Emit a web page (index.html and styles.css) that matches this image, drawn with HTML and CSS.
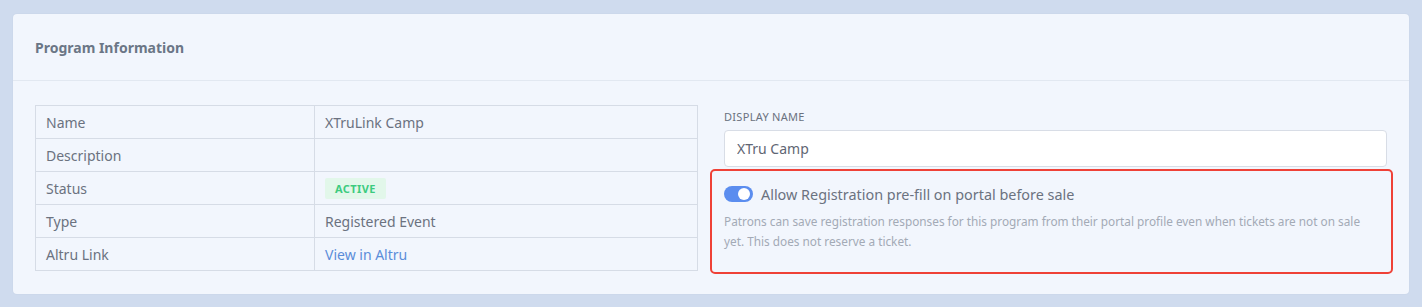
FILE: index.html
```html
<!DOCTYPE html>
<html lang="en">
<head>
  <meta charset="UTF-8">
  <meta name="viewport" content="width=device-width, initial-scale=1.0">
  <title>Program Information</title>
  <link rel="stylesheet" href="styles.css">
</head>
<body>
  <div class="card">
    <div class="card-header">
      <h2>Program Information</h2>
    </div>
    <div class="card-body">
      <table class="info-table">
        <tr><td>Name</td><td>XTruLink Camp</td></tr>
        <tr><td>Description</td><td></td></tr>
        <tr><td>Status</td><td><span class="badge">Active</span></td></tr>
        <tr><td>Type</td><td>Registered Event</td></tr>
        <tr><td>Altru Link</td><td><a href="#" class="link">View in Altru</a></td></tr>
      </table>

      <div class="side">
        <label class="field-label" for="displayName">Display Name</label>
        <input type="text" id="displayName" class="field-input" value="XTru Camp">

        <div class="highlight">
          <div class="toggle-row">
            <span class="toggle"><span class="knob"></span></span>
            <span class="toggle-label">Allow Registration pre-fill on portal before sale</span>
          </div>
          <p class="help">Patrons can save registration responses for this program from their portal profile even when tickets are not on sale yet. This does not reserve a ticket.</p>
        </div>
      </div>
    </div>
  </div>
</body>
</html>
```

FILE: styles.css
```css
:root {
  --page: #cfdbee;
  --card: #f2f6fd;
  --line: #d6dce6;
  --text: #6b7280;
  --muted: #a3aab6;
  --accent: #5b8def;
}

body {
  margin: 0;
  padding: 14px 13px;
  background: var(--page);
  font-family: "Noto Sans", "Open Sans", sans-serif;
  color: var(--text);
}

.card {
  width: 1396px;
  background: var(--card);
  border-radius: 4px;
  box-shadow: 0 0 2px rgba(0,0,0,0.06);
}

.card-header {
  height: 67px;
  display: flex;
  align-items: center;
  padding: 0 22px;
  border-bottom: 1px solid #e2e8f1;
  box-sizing: border-box;
}

.card-header h2 {
  margin: 0;
  font-size: 14px;
  font-weight: bold;
  color: #6b7686;
}

.card-body {
  display: grid;
  grid-template-columns: 663px 663px;
  column-gap: 26px;
  padding: 24px 22px 20px;
  align-items: start;
}

.info-table {
  border-collapse: collapse;
  width: 663px;
  font-size: 14px;
}

.info-table td {
  border: 1px solid var(--line);
  height: 33px;
  padding: 0 10px;
  box-sizing: border-box;
}

.info-table td:first-child {
  width: 279px;
}

.badge {
  display: inline-block;
  background: #e2f7ea;
  color: #3ccb7f;
  font-size: 11px;
  font-weight: bold;
  text-transform: uppercase;
  letter-spacing: 0.4px;
  padding: 0 10px;
  line-height: 21px;
  border-radius: 2px;
}

.link {
  color: #5b8dd9;
  text-decoration: none;
}

.side {
  padding-top: 4px;
}

.field-label {
  display: block;
  font-size: 11px;
  line-height: 16px;
  letter-spacing: 0.3px;
  text-transform: uppercase;
  color: #6b7280;
  margin-bottom: 5px;
}

.field-input {
  display: block;
  width: 100%;
  height: 37px;
  box-sizing: border-box;
  border: 1px solid #d8dde6;
  border-radius: 4px;
  background: #fff;
  padding: 0 12px;
  font-family: inherit;
  font-size: 14px;
  color: #5f6673;
}

.highlight {
  margin: 2px -6px 0 -14px;
  border: 2px solid #ef4137;
  border-radius: 5px;
  padding: 15px 12px 21px 12px;
}

.toggle-row {
  display: flex;
  align-items: center;
  gap: 8px;
  height: 16px;
}

.toggle {
  width: 29px;
  height: 16px;
  border-radius: 8px;
  background: var(--accent);
  position: relative;
  flex: none;
}

.knob {
  position: absolute;
  top: 2px;
  right: 3px;
  width: 12px;
  height: 12px;
  border-radius: 50%;
  background: #fff;
}

.toggle-label {
  font-size: 14.4px;
  color: #6b7280;
}

.help {
  margin: 9px 0 0;
  font-size: 11.8px;
  line-height: 20px;
  color: var(--muted);
}
```
